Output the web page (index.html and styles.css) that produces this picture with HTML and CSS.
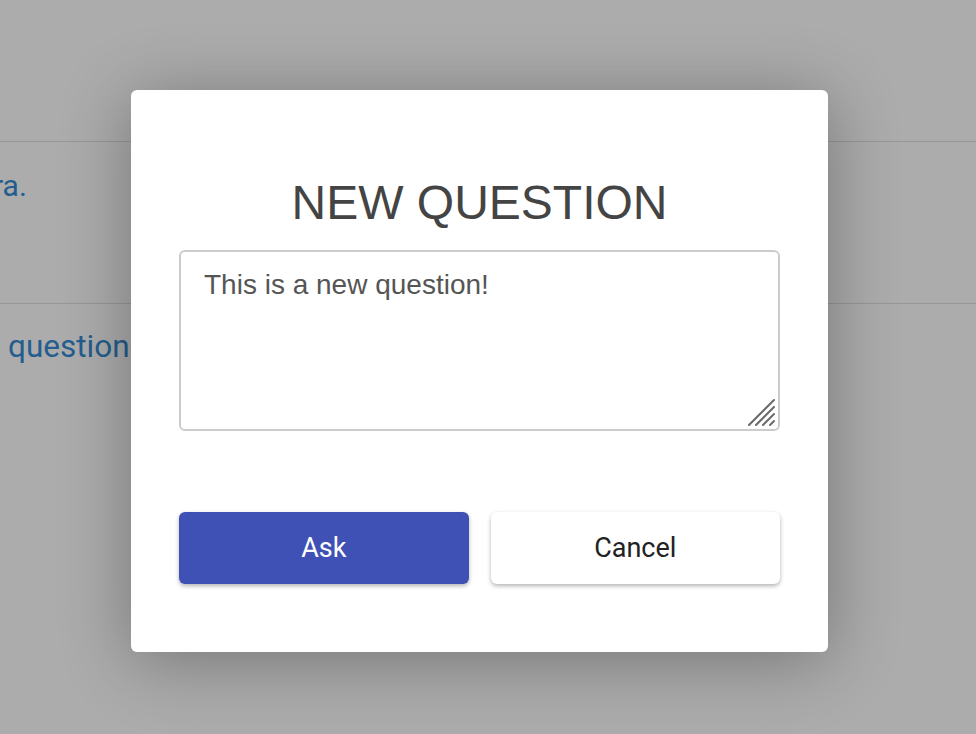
FILE: index.html
```html
<!DOCTYPE html>
<html lang="en">
<head>
<meta charset="utf-8">
<title>New question</title>
<link rel="stylesheet" href="styles.css">
</head>
<body>
<div class="page">
  <div class="row row-top"></div>
  <div class="row row-answer"><span class="answer-text">ra.</span></div>
  <div class="row row-question"><span class="question-text">question</span></div>
</div>
<div class="modal">
  <h1 class="modal-title">NEW QUESTION</h1>
  <div class="input-wrap">
    <textarea class="modal-input">This is a new question!</textarea>
    <svg class="resizer" width="30" height="30" viewBox="0 0 30 30" aria-hidden="true">
      <g stroke="#6a6a6a" stroke-width="2" stroke-linecap="round">
        <line x1="2" y1="27" x2="27" y2="2"/>
        <line x1="9" y1="27" x2="27" y2="9"/>
        <line x1="16" y1="27" x2="27" y2="16"/>
        <line x1="23" y1="27" x2="27" y2="23"/>
      </g>
    </svg>
  </div>
  <div class="modal-actions">
    <button class="btn btn-primary" type="button">Ask</button>
    <button class="btn btn-secondary" type="button">Cancel</button>
  </div>
</div>
</body>
</html>
```
FILE: styles.css
```css
html, body {
  margin: 0;
  padding: 0;
  height: 100%;
}
body {
  background: #acacac;
  font-family: Roboto, "Liberation Sans", Arial, sans-serif;
  overflow: hidden;
}
.page {
  display: flex;
  flex-direction: column;
}
.row {
  border-bottom: 1px solid #979797;
}
.row-top {
  height: 141px;
}
.row-answer {
  height: 162px;
  padding-top: 26px;
  box-sizing: border-box;
}
.answer-text {
  display: block;
  margin-left: -7px;
  font-size: 30px;
  line-height: 36px;
  color: #245d8e;
}
.row-question {
  border-bottom: none;
  padding-top: 25px;
}
.question-text {
  display: block;
  margin-left: 8px;
  font-size: 31.5px;
  line-height: 36px;
  color: #245d8e;
}
.modal {
  position: absolute;
  left: 131px;
  top: 90px;
  width: 697px;
  height: 562px;
  box-sizing: border-box;
  padding: 85px 48px 0;
  background: #ffffff;
  border-radius: 6px;
  box-shadow: 0 8px 70px rgba(0, 0, 0, 0.32);
  display: flex;
  flex-direction: column;
}
.modal-title {
  margin: 0;
  font-family: "Liberation Sans", Arial, sans-serif;
  font-weight: normal;
  font-size: 48px;
  line-height: 56px;
  text-align: center;
  color: #444444;
}
.input-wrap {
  position: relative;
  margin-top: 19px;
}
.modal-input {
  display: block;
  width: 100%;
  height: 181px;
  box-sizing: border-box;
  border: 2px solid #cccccc;
  border-radius: 6px;
  padding: 17px 23px;
  font-family: "Liberation Sans", Arial, sans-serif;
  font-size: 28px;
  color: #555555;
  outline: none;
  background: #ffffff;
  resize: none;
}
.resizer {
  position: absolute;
  right: 3px;
  bottom: 3px;
  pointer-events: none;
}
.modal-actions {
  margin-top: 81px;
  display: grid;
  grid-template-columns: 1fr 1fr;
  gap: 22px;
}
.btn {
  height: 72px;
  border: none;
  border-radius: 6px;
  font-family: Roboto, "Liberation Sans", Arial, sans-serif;
  font-size: 27px;
  cursor: pointer;
  box-shadow: 0 2px 4px rgba(0, 0, 0, 0.3);
}
.btn-primary {
  background: #3f51b5;
  color: #ffffff;
}
.btn-secondary {
  background: #ffffff;
  color: #222222;
}
```
